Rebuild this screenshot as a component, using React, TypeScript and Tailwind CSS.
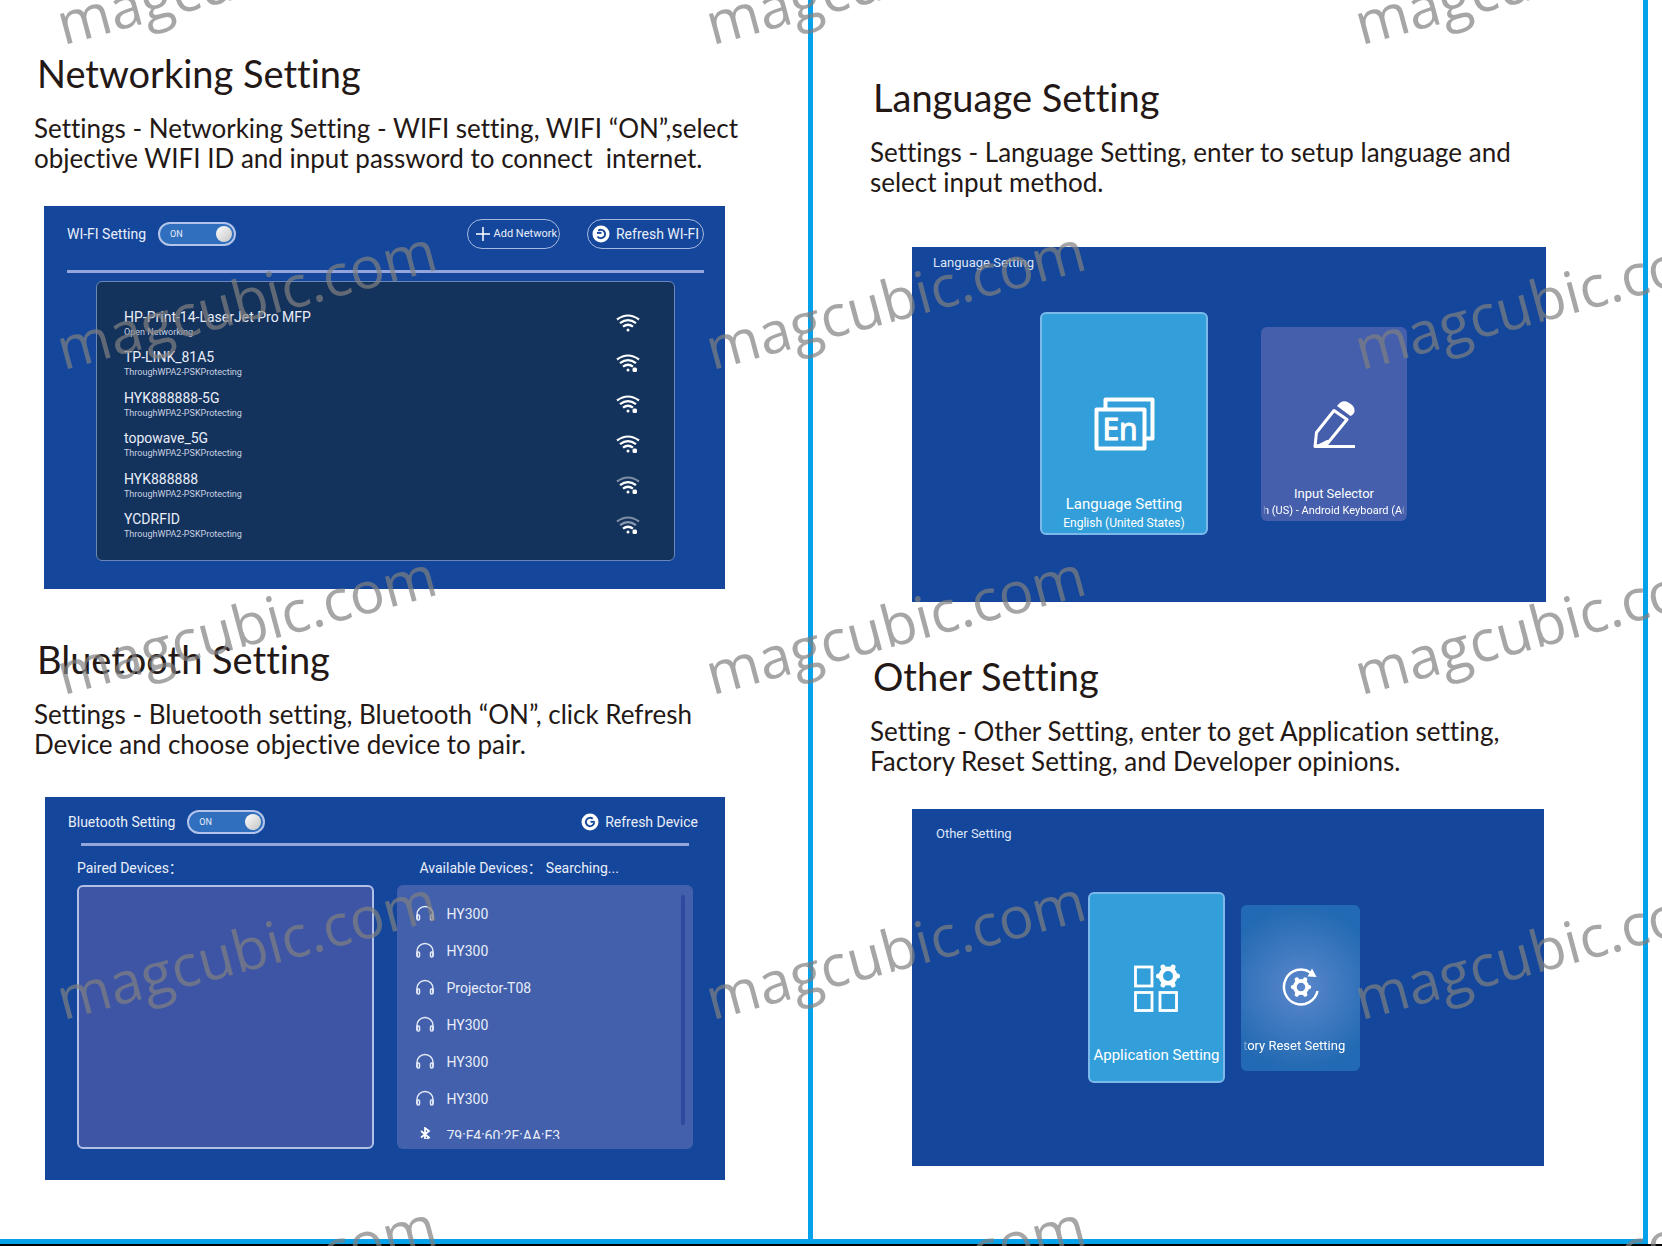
import { useState } from "react";
import type { ReactNode } from "react";

const NETWORKS = [
  { name: "HP-Print-14-LaserJet Pro MFP", note: "Open Networking", bars: 3, locked: false },
  { name: "TP-LINK_81A5", note: "ThroughWPA2-PSKProtecting", bars: 3, locked: true },
  { name: "HYK888888-5G", note: "ThroughWPA2-PSKProtecting", bars: 3, locked: true },
  { name: "topowave_5G", note: "ThroughWPA2-PSKProtecting", bars: 3, locked: true },
  { name: "HYK888888", note: "ThroughWPA2-PSKProtecting", bars: 2, locked: true },
  { name: "YCDRFID", note: "ThroughWPA2-PSKProtecting", bars: 1, locked: true },
];

const DEVICES = ["HY300", "HY300", "Projector-T08", "HY300", "HY300", "HY300"];

function WifiIcon({ bars, locked }: { bars: number; locked: boolean }) {
  return (
    <svg viewBox="0 0 24 18" className="w-6 h-[18px]" fill="none" stroke="#fff" strokeWidth="2.2">
      <path d="M1 5.500Q12-2.500 23 5.500" opacity={bars > 2 ? 1 : 0.45} />
      <path d="M4 9.200Q12 3 20 9.200" opacity={bars > 1 ? 1 : 0.5} />
      <path d="M7 12.700Q12 8.800 17 12.700" />
      <circle cx="12" cy="16" r="1.500" fill="#fff" stroke="none" />
      {locked && <rect x="16.500" y="13.500" width="4.500" height="4.500" rx="1.500" fill="#fff" stroke="none" />}
    </svg>
  );
}

function HeadphonesIcon() {
  return (
    <svg viewBox="0 0 20 17" className="w-5 h-[17px]" fill="none" stroke="#e6ebf7" strokeWidth="1.5">
      <path d="M2 14V9.500a8 8 0 0 1 16 0V14" />
      <rect x="2" y="10" width="2.500" height="5" rx="1" />
      <rect x="15.500" y="10" width="2.500" height="5" rx="1" />
    </svg>
  );
}

function BluetoothIcon() {
  return (
    <svg viewBox="0 0 20 17" className="w-5 h-[17px]" fill="none" stroke="#fff" strokeWidth="1.7">
      <path d="M6 4l8 6.500-4 3V1l4 3-8 6.500" />
    </svg>
  );
}

function RefreshIcon({ flip }: { flip?: boolean }) {
  return (
    <svg viewBox="0 0 18 18" className="size-[18px]">
      <circle cx="9" cy="9" r="8.500" fill="#fff" />
      <g fill="none" stroke="#14479b" strokeWidth="1.9">
        {flip ? (
          <>
            <path d="M6.200 5.800A4.200 4.200 0 1 1 5.500 11.500" />
            <path d="M5 7.900h4.500" />
          </>
        ) : (
          <>
            <path d="M11.800 5.800A4.200 4.200 0 1 0 13.200 9.500" />
            <path d="M13.800 8.800H9.500" />
          </>
        )}
      </g>
    </svg>
  );
}

function LanguageIcon() {
  return (
    <svg viewBox="0 0 61 54" className="w-[61px] h-[54px]" fill="none" stroke="#fff" strokeWidth="4" strokeLinejoin="round">
      <path d="M11.500 11V2.500h47V41.500h-7" />
      <rect x="2.500" y="12.500" width="48" height="39" />
      <text x="26" y="43" textAnchor="middle" fill="#fff" stroke="#fff" strokeWidth="1" fontFamily="'Noto Sans', sans-serif" fontSize="30">
        En
      </text>
    </svg>
  );
}

function PencilIcon() {
  return (
    <svg viewBox="0 0 43 48" className="w-[43px] h-12" fill="none" stroke="#fff" strokeWidth="3" strokeLinejoin="round">
      <path d="M21 10.500l13 9L14 44 2 46.500l1.500-14zM2 46.500h40" />
      <path d="M2 46.500L14 44l3-3.500-3 0z" fill="#fff" strokeWidth="1" />
      <path d="M24 6Q29-1 35.500 2.500t6 8.500q0 3-4 5z" fill="#fff" stroke="none" />
    </svg>
  );
}

// Six-toothed gear centred on the origin.
function Gear() {
  return (
    <g fill="none" stroke="#fff">
      <circle r="7.200" strokeWidth="4.400" />
      <path strokeWidth="5" strokeLinecap="round" d="M4.500 -7.800L5 -9M8.500 0H9.500M4.500 7.800L5 9M-4.500 7.800L-5 9M-8.500 0H-9.500M-4.500 -7.800L-5 -9" />
    </g>
  );
}

function AppsIcon() {
  return (
    <svg viewBox="0 0 46 48" className="w-[46px] h-12 overflow-visible" fill="none" stroke="#fff" strokeWidth="2.800">
      <rect x="1.500" y="3" width="16.500" height="19" />
      <rect x="1.500" y="28.500" width="16.500" height="18" />
      <rect x="26" y="28.500" width="16.500" height="18" />
      <g transform="translate(34 12)">
        <Gear />
      </g>
    </svg>
  );
}

function ResetIcon() {
  return (
    <svg viewBox="0 0 38 38" className="size-[38px]" fill="none" stroke="#fff" strokeWidth="2.500">
      <path d="M28.500 4.500A17 17.500 0 1 0 35.500 23" />
      <path d="M30 0.500l4.500 8.500-9-0.500z" fill="#fff" stroke="none" />
      <g transform="translate(19 19) scale(0.850)">
        <Gear />
      </g>
    </svg>
  );
}

function Toggle({ id, label }: { id: string; label: string }) {
  const [on, setOn] = useState(true);
  return (
    <label htmlFor={id} className="flex items-center gap-3 text-sm cursor-pointer">
      {label}
      <input id={id} type="checkbox" role="switch" checked={on} onChange={() => setOn(!on)} className="sr-only" />
      <span className="flex h-6 w-[78px] items-center justify-between rounded-full border-2 border-[#b3c3ea] bg-[#2f6fbd] pl-2.5 pr-0.5">
        <span className="text-[9px]">{on ? "ON" : "OFF"}</span>
        <span className="size-4 rounded-full bg-linear-to-br from-white to-[#c4c4c4]" />
      </span>
    </label>
  );
}

function Guide({ title, children }: { title: string; children: ReactNode }) {
  return (
    <>
      <h2 className="ml-[3px] text-[38px] leading-10">{title}</h2>
      <p className="mt-5 text-[26px] leading-[30px] whitespace-pre">{children}</p>
    </>
  );
}

function WifiPanel() {
  return (
    <div className="ml-2.5 mt-[33px] bg-[#14479b] pl-[23px] pr-[21px] pt-3 pb-7 text-[#e9eefa]">
      <div className="flex h-8 items-center">
        <Toggle id="wifi" label="WI-FI Setting" />
        <button className="ml-auto flex h-[30px] items-center gap-1 rounded-full border border-[#a9b8e0] pl-2 pr-0.5 text-[11px]">
          <svg viewBox="0 0 14 14" className="size-3.5" stroke="#fff" strokeWidth="1.500">
            <path d="M7 0v14M0 7h14" />
          </svg>
          Add Network
        </button>
        <button className="ml-[27px] flex h-[30px] items-center gap-1.5 rounded-full border border-[#a9b8e0] px-1 text-sm">
          <RefreshIcon flip />
          Refresh WI-FI
        </button>
      </div>
      <div className="mt-5 h-[3px] bg-[#93a5da]" />
      <ul className="mx-[29px] mt-2 flex min-h-[280px] flex-col justify-between rounded-md border border-[#6b87b8] bg-[#14335c] pl-[27px] pr-[34px] pt-[26px] pb-5">
        {NETWORKS.map((n) => (
          <li key={n.name} className="flex items-center justify-between">
            <div>
              <div className="text-sm leading-[18px]">{n.name}</div>
              <div className="text-[9px] leading-3 text-[#c9d2e2]">{n.note}</div>
            </div>
            <WifiIcon bars={n.bars} locked={n.locked} />
          </li>
        ))}
      </ul>
    </div>
  );
}

function BluetoothPanel() {
  return (
    <div className="ml-[11px] mt-[38px] bg-[#14479b] pt-[13px] pb-[31px] text-[#e9eefa]">
      <div className="flex h-6 items-center justify-between pl-[23px] pr-[27px]">
        <Toggle id="bluetooth" label="Bluetooth Setting" />
        <button className="flex items-center gap-1.5 text-sm">
          <RefreshIcon />
          Refresh Device
        </button>
      </div>
      <div className="mx-9 mt-[9px] h-[3px] bg-[#93a5da]" />
      <div className="mt-3 grid grid-cols-2 gap-[23px] px-8 text-sm leading-5">
        <section className="flex flex-col">
          <h3>Paired Devices：</h3>
          <div className="mt-[7px] flex-1 rounded-md border-2 border-[#b3c0e6] bg-[#3d55a4]" />
        </section>
        <section>
          <h3 className="flex gap-1 pl-[23px]">
            Available Devices： <span>Searching...</span>
          </h3>
          <div className="mt-[7px] flex h-[264px] justify-between rounded-md bg-[#4260ab] pt-2.5 pr-2 pb-2.5 pl-[18px]">
            <ul className="flex-1 overflow-hidden">
              {DEVICES.map((d, i) => (
                <li key={i} className="flex h-[37px] items-center gap-3">
                  <HeadphonesIcon />
                  {d}
                </li>
              ))}
              <li className="flex h-[37px] items-center gap-3">
                <BluetoothIcon />
                79:F4:60:2F:AA:F3
              </li>
            </ul>
            <div className="mb-3.5 w-1 rounded-full bg-[#2f4a9c]" />
          </div>
        </section>
      </div>
    </div>
  );
}

function LanguagePanel() {
  return (
    <div className="ml-[42px] mt-[50px] bg-[#14479b] pt-2 pb-[67px] text-white">
      <h3 className="pl-[21px] text-[13px] leading-4 text-[#dfe6f7]">Language Setting</h3>
      <div className="mt-[41px] flex items-center justify-center gap-[53px] pr-[11px]">
        <button className="flex h-[223px] w-[168px] flex-col items-center rounded-md border-2 border-[#7cb8ea] bg-[#339fda] pt-[83px]">
          <LanguageIcon />
          <span className="mt-[43px] text-[15px] leading-5">Language Setting</span>
          <span className="text-xs leading-[18px]">English (United States)</span>
        </button>
        <button className="flex h-[194px] w-[146px] flex-col items-center rounded-md bg-[#455fac] px-0.5 pt-[73px]">
          <PencilIcon />
          <span className="mt-9 text-[13px] leading-5">Input Selector</span>
          <span className="w-full overflow-hidden mask-x-from-97% text-left text-[11px] leading-3.5 whitespace-nowrap">
            h (US) - Android Keyboard (AC
          </span>
        </button>
      </div>
    </div>
  );
}

function OtherPanel() {
  return (
    <div className="ml-[42px] mr-0.5 mt-[33px] bg-[#14479b] pt-[17px] pb-[83px] text-white">
      <h3 className="pl-6 text-[13px] leading-4 text-[#dfe6f7]">Other Setting</h3>
      <div className="mt-[50px] flex items-center justify-center gap-4 pr-2">
        <button className="flex h-[191px] w-[137px] flex-col items-center rounded-md border-2 border-[#7cb8ea] bg-[#339fda] pt-[70px]">
          <AppsIcon />
          <span className="mt-[33px] text-[15px] leading-5 whitespace-nowrap">Application Setting</span>
        </button>
        <button className="flex h-[166px] w-[119px] flex-col items-center rounded-md bg-radial-[circle] from-[#5b87cb] to-[#226ab3] to-80% px-0.5 pt-[63px]">
          <ResetIcon />
          <span className="mt-[30px] w-full overflow-hidden mask-l-from-95% text-left text-[13px] leading-5 whitespace-nowrap">
            tory Reset Setting
          </span>
        </button>
      </div>
    </div>
  );
}

// Repeating site mark laid over the whole sheet.
function Watermark() {
  return (
    <div aria-hidden="true" className="pointer-events-none absolute inset-0 overflow-hidden">
      <div className="-mt-[273px] ml-[65px] grid auto-rows-[325px] grid-cols-[repeat(3,649px)]">
        {Array.from({ length: 15 }, (_, i) => (
          <div key={i} className="flex items-end">
            <span className="origin-bottom-left -rotate-15 font-['Open_Sans',sans-serif] text-[58px] leading-none text-[#808080]/70">
              magcubic.com
            </span>
          </div>
        ))}
      </div>
    </div>
  );
}

export default function App() {
  return (
    <div className="relative flex min-h-screen flex-col overflow-hidden bg-white font-[Roboto,'Noto_Sans_CJK_SC',sans-serif]">
      <main className="grid flex-1 grid-cols-[813fr_835fr] pr-3.5 text-[#231815] [&_h2]:font-[Lato,sans-serif] [&_p]:font-[Lato,sans-serif] [&_h2,&_p]:[font-variant-ligatures:none]">
        <div className="min-w-0 border-r-[5px] border-[#05a2ec] pt-[53px] pl-[34px] pr-[83px]">
          <Guide title="Networking Setting">
            {"Settings - Networking Setting - WIFI setting, WIFI “ON”,select\nobjective WIFI ID and input password to connect \u00a0internet."}
          </Guide>
          <WifiPanel />
          <div className="mt-[50px]">
            <Guide title="Bluetooth Setting">
              {"Settings - Bluetooth setting, Bluetooth “ON”, click Refresh\nDevice and choose objective device to pair."}
            </Guide>
          </div>
          <BluetoothPanel />
        </div>
        <div className="min-w-0 border-r-[5px] border-[#05a2ec] pt-[77px] pl-[57px] pr-[97px]">
          <Guide title="Language Setting">
            {"Settings - Language Setting, enter to setup language and\nselect input method."}
          </Guide>
          <LanguagePanel />
          <div className="mt-[54px]">
            <Guide title="Other Setting">
              {"Setting - Other Setting, enter to get Application setting,\nFactory Reset Setting, and Developer opinions."}
            </Guide>
          </div>
          <OtherPanel />
        </div>
      </main>
      <div className="mr-3.5 h-[5px] bg-[#05a2ec]" />
      <div className="h-0.5 bg-black" />
      <Watermark />
    </div>
  );
}
